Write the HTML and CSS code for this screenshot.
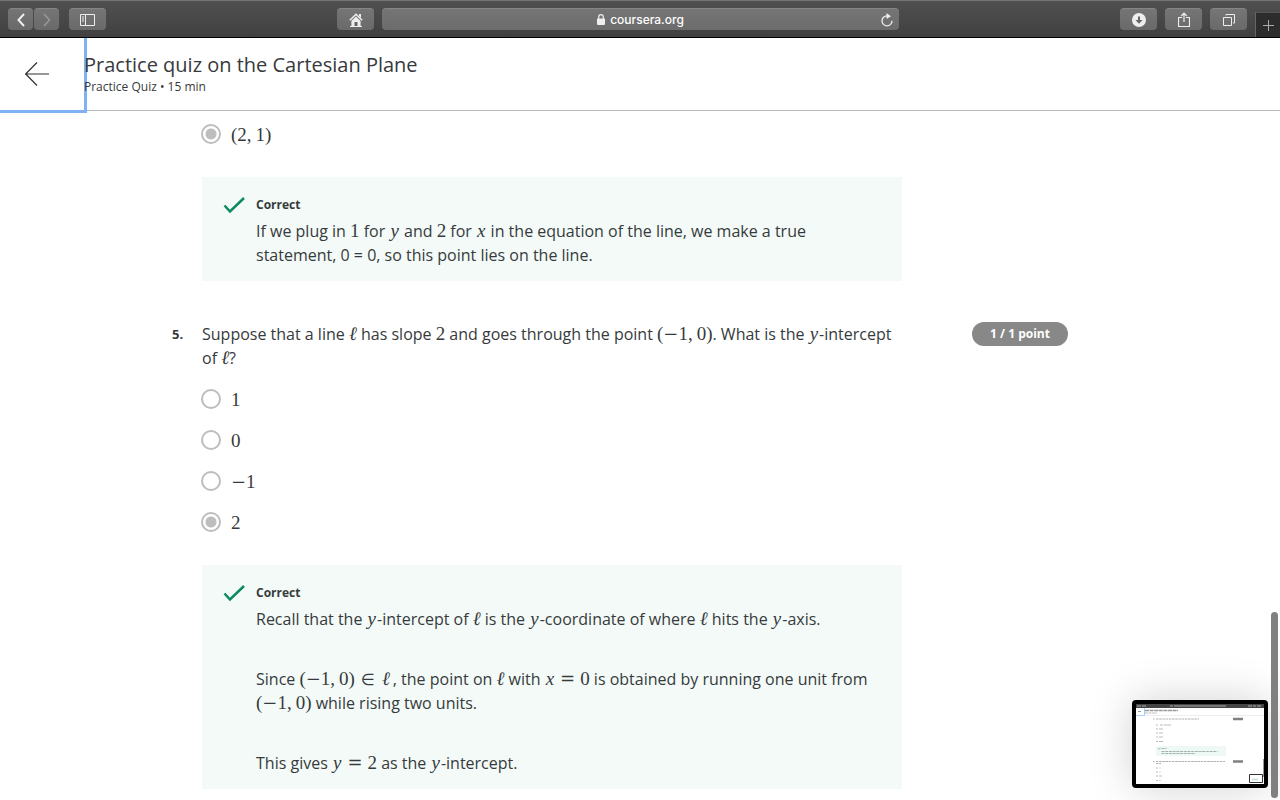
FILE: index.html
```html
<!DOCTYPE html>
<html lang="en">
<head>
<meta charset="utf-8">
<meta name="viewport" content="width=device-width, initial-scale=1">
<title>Practice quiz on the Cartesian Plane</title>
<link rel="stylesheet" href="styles.css">
</head>
<body>
<div class="toolbar">
  <div class="group history">
    <button class="tool narrow" aria-label="Back"><svg width="8" height="14" viewBox="0 0 8 14"><path d="M7 1 1.500 7 7 13" stroke="#eee" stroke-width="2"/></svg></button>
    <button class="tool narrow" aria-label="Forward"><svg width="8" height="14" viewBox="0 0 8 14"><path d="M1 1 6.500 7 1 13" stroke="#999" stroke-width="1.500"/></svg></button>
  </div>
  <button class="tool" aria-label="Sidebar"><svg width="15" height="12" viewBox="0 0 15 12"><path d="M.5.500h14v11H.5zM5.500.500v11M2 3h2M2 5h2M2 7h2" stroke="#eee"/></svg></button>
  <div class="group middle">
    <button class="tool" aria-label="Home"><svg width="14" height="14" viewBox="0 0 14 14"><path d="M.8 7.300 7 1.200l6.200 6.100" stroke="#eee" stroke-width="1.500"/><path d="M10 1h2v4l-2-2zM7 3.500 11.600 8v5H13v1H1v-1h1.400V8z" fill="#eee"/><path d="M5.500 9h3v4h-3z" fill="#666"/></svg></button>
    <div class="address">
      <span class="site"><svg width="8" height="11" viewBox="0 0 8 11"><path d="M0 4.500h8V10a1 1 0 0 1-1 1H1a1 1 0 0 1-1-1z" fill="#eee"/><path d="M1.700 5V3a2.300 2.300 0 0 1 4.600 0v2" stroke="#eee" stroke-width="1.200"/></svg>coursera.org</span>
      <button class="reload" aria-label="Reload"><svg width="12" height="14" viewBox="0 0 12 14"><path d="M6 2.800a5 5 0 1 0 5 5" stroke="#eee" stroke-width="1.300"/><path d="M5.500 0 10 3.200 5.500 6z" fill="#eee"/></svg></button>
    </div>
  </div>
  <div class="group actions">
    <button class="tool" aria-label="Downloads"><svg width="14" height="14" viewBox="0 0 14 14"><circle cx="7" cy="7" r="7" fill="#eee"/><path d="M6 3.500h2V7h2.500L7 10.800 3.500 7H6z" fill="#666"/></svg></button>
    <button class="tool" aria-label="Share"><svg width="12" height="16" viewBox="0 0 12 16"><path d="M4 5.500H.5v9h11v-9H8M6 10V1.500M3.200 4 6 1.200 8.800 4" stroke="#eee" stroke-width="1.200"/></svg></button>
    <button class="tool" aria-label="Tabs"><svg width="12" height="12" viewBox="0 0 12 12"><path d="M.5 3.500h8v8h-8zM3 1.500v-1h8.500V9H10" stroke="#eee"/></svg></button>
  </div>
  <button class="newtab" aria-label="New tab"><svg width="11" height="11" viewBox="0 0 11 11"><path d="M5.500 0v11M0 5.500h11" stroke="#aaa"/></svg></button>
</div>

<header class="header">
  <button class="back" aria-label="Go back"><svg width="24" height="24" viewBox="0 0 24 24"><path d="M24 12H1M12 .5.700 12 12 23.500" stroke="#333" stroke-width="1.200"/></svg></button>
  <div class="heading">
    <h1>Practice quiz on the Cartesian Plane</h1>
    <p>Practice Quiz • 15 min</p>
  </div>
</header>

<main class="page">
  <div class="quiz">
    <section class="question">
      <div class="body">
        <label class="option"><input type="radio" name="q4" checked><span class="m">(2,<i class="thin"></i>1)</span></label>
        <div class="feedback">
          <svg class="check" width="22" height="18" viewBox="0 0 22 18"><path d="M1.500 9.500 7 15.500 21 2" stroke="#0a8a5f" stroke-width="2.500"/></svg>
          <div class="note">
            <h2>Correct</h2>
            <p>If we plug in <span class="m">1</span> for <var>y</var> and <span class="m">2</span> for <var>x</var> in the equation of the line, we make a true statement, 0 = 0, so this point lies on the line.</p>
          </div>
        </div>
      </div>
    </section>
    <section class="question">
      <div class="number">5.</div>
      <div class="body">
        <p class="prompt">Suppose that a line <var class="ell">ℓ</var> has slope <span class="m">2</span> and goes through the point <span class="m">(<b>−</b>1,<i class="thin"></i>0)</span>. What is the <var>y</var>-intercept of <var class="ell">ℓ</var>?</p>
        <div class="options">
          <label class="option"><input type="radio" name="q5"><span class="m">1</span></label>
          <label class="option"><input type="radio" name="q5"><span class="m">0</span></label>
          <label class="option"><input type="radio" name="q5"><span class="m"><b>−</b>1</span></label>
          <label class="option"><input type="radio" name="q5" checked><span class="m">2</span></label>
        </div>
        <div class="feedback">
          <svg class="check" width="22" height="18" viewBox="0 0 22 18"><path d="M1.500 9.500 7 15.500 21 2" stroke="#0a8a5f" stroke-width="2.500"/></svg>
          <div class="note">
            <h2>Correct</h2>
            <p>Recall that the <var>y</var>-intercept of <var class="ell">ℓ</var> is the <var>y</var>-coordinate of where <var class="ell">ℓ</var> hits the <var>y</var>-axis.</p>
            <p>Since <span class="m">(<b>−</b>1,<i class="thin"></i>0)<b class="rel in">∈</b><var class="script">ℓ</var></span>, the point on <var class="ell">ℓ</var> with <span class="m"><var>x</var><b class="rel">=</b>0</span> is obtained by running one unit from <span class="m">(<b>−</b>1,<i class="thin"></i>0)</span> while rising two units.</p>
            <p>This gives <span class="m"><var>y</var><b class="rel">=</b>2</span> as the <var>y</var>-intercept.</p>
          </div>
        </div>
      </div>
      <div class="points">1 / 1 point</div>
    </section>
  </div>
</main>

<div class="scrollbar"></div>
<div class="preview">
  <svg width="128" height="80" viewBox="0 0 128 80">
    <path d="M0 0h128v80H0z" fill="#fff"/>
    <path d="M0 0h128v4H0z" fill="#444"/>
    <path d="M1 2h4M6 2h4M34 2h3M38 2h52M112 2h4M117 2h3M121 2h4" stroke="#777" stroke-width="2"/>
    <path d="M8.500 4v7.500H0" stroke="#a9cdfa"/>
    <path d="M9 11.500h119" stroke="#ddd" stroke-width=".5"/>
    <path d="M2 7.500h3" stroke="#999"/>
    <path d="M9 6.500h33" stroke="#999" stroke-width="1.500" stroke-dasharray="4 .6"/>
    <path d="M9 9h12" stroke="#bbb" stroke-dasharray="3 .5"/>
    <path d="M17 15h1.500M20 15h43M17 57.500h1.500M20 57.500h69M20 59.500h5" stroke="#b0b0b0" stroke-dasharray="2.500 .7"/>
    <path d="M97 15h10M97 57.500h10" stroke="#808080" stroke-width="2.500"/>
    <path d="M20 21h2M24 21h3M28 21h7M20 25h2M23 25h4M20 29h2M23 29h4M20 33h2M23 33h4M20 37.500h2M23 37.500h4M20 64h2M23.500 64h1M20 68h2M23.500 68h1M20 72h2M23 72h3M20 76.500h2M23.500 76.500h1" stroke="#bbb"/>
    <path d="M20 42h70v10H20z" fill="#eef8f5"/>
    <path d="m22 44.500 1 .8 1.500-1.500" stroke="#0a8a5f" stroke-width=".5"/>
    <path d="M25.500 44.500h5M25.500 47.500h56M25.500 49.500h34" stroke="#a5b2ad" stroke-dasharray="3 .7"/>
    <path d="M127.500 55v18" stroke="#999"/>
    <path d="M113.500 70.500h13v8h-13z" fill="#fff" stroke="#333"/>
    <path d="M116 75.500h6" stroke="#cde4dc" stroke-width="2"/>
  </svg>
</div>
</body>
</html>
```
FILE: styles.css
```css
* { box-sizing: border-box; }
body {
  margin: 0;
  height: 100vh;
  overflow: hidden;
  display: flex;
  flex-direction: column;
  position: relative;
  background: #fff;
  color: #373a3c;
  font: 16px/24px "Open Sans", "Noto Sans", sans-serif;
}
h1, h2, p { margin: 0; font-weight: 400; }
button { padding: 0; border: 0; background: none; }
svg { display: block; fill: none; flex: none; }

.toolbar {
  flex: none;
  height: 38px;
  display: flex;
  align-items: center;
  padding-left: 8px;
  background: linear-gradient(#505050, #404040);
  border-top: 1px solid #757575;
  border-bottom: 1px solid #000;
  position: relative;
  z-index: 2;
}
.group { display: flex; gap: 8px; }
.history { gap: 1px; margin-right: 10px; }
.middle { flex: 0 1 572px; margin: 0 auto; padding-left: 10px; }
.actions { margin-right: 8px; }
.tool {
  width: 37px;
  height: 22px;
  flex: none;
  display: flex;
  align-items: center;
  justify-content: center;
  border-radius: 4px;
  background: linear-gradient(#757575, #6a6a6a);
  border-top: 1px solid #858585;
}
.narrow { width: 25px; }
.address {
  flex: 1;
  height: 22px;
  display: flex;
  align-items: center;
  border-radius: 4px;
  background: linear-gradient(#757575, #6c6c6c);
  border-top: 1px solid #858585;
  padding: 0 6px 0 18px;
}
.site {
  flex: 1;
  display: flex;
  align-items: center;
  justify-content: center;
  gap: 5px;
  color: #fff;
  font: 500 12px/20px Inter, sans-serif;
}
.newtab {
  width: 25px;
  align-self: flex-end;
  height: 25px;
  display: flex;
  align-items: center;
  justify-content: center;
  background: #2c2c2c;
  border-left: 1px solid #666;
  border-top: 1px solid #555;
}

.header {
  flex: none;
  display: flex;
  border-bottom: 1px solid #bbb;
  position: relative;
  z-index: 1;
}
.back {
  width: 84px;
  height: 72px;
  padding-right: 10px;
  display: flex;
  align-items: center;
  justify-content: center;
  box-shadow: 0 0 0 3px #80b1f5;
}
.heading { padding-top: 13px; position: relative; }
.heading h1 { font-size: 20px; line-height: 28px; }
.heading p { font-size: 12px; line-height: 16px; }

.page { flex: 1; min-height: 0; overflow: hidden; padding: 11px 40px 0 0; }
.quiz {
  max-width: 896px;
  margin: 0 auto;
  display: flex;
  flex-direction: column;
  gap: 41px;
}
.question { display: grid; grid-template-columns: 30px minmax(0, 700px) 1fr; align-items: start; }
.number { font-size: 13px; font-weight: 700; }
.body { grid-column: 2; }
.options { display: flex; flex-direction: column; gap: 17px; padding-top: 17px; }
.option { display: flex; align-items: center; gap: 10px; height: 24px; margin-left: -1px; }
.option input {
  appearance: none;
  width: 20px;
  height: 20px;
  margin: 0;
  flex: none;
  border: 2px solid #bdbdbd;
  border-radius: 50%;
  background: #fff;
}
.option input:checked { background: radial-gradient(circle, #bdbdbd 5px, #fff 6px); }
.feedback {
  display: flex;
  gap: 11px;
  margin-top: 31px;
  padding: 19px 21px 14px;
  background: #f3faf8;
}
.note { display: flex; flex-direction: column; gap: 36px; }
.note h2 { font-size: 12px; line-height: 18px; font-weight: 700; margin-bottom: -31px; }
.points {
  justify-self: end;
  width: 96px;
  border-radius: 12px;
  background: #888;
  color: #fff;
  font-size: 12px;
  font-weight: 700;
  text-align: center;
}

.m, var {
  font-family: "Liberation Serif", "DejaVu Serif", serif;
  font-size: 19px;
  line-height: 1;
  white-space: nowrap;
}
var { padding: 0 1px; }
.ell { padding: 0; }
.m b { font-family: "DejaVu Serif", serif; font-size: 18px; line-height: 1; font-weight: 400; }
.m .rel { margin: 0 5px; }
.m .in { font-family: "DejaVu Sans", sans-serif; font-size: 16px; margin: 0 6px; }
.thin { margin-right: 4px; }
.script { padding: 0 3px 0 1px; }

.scrollbar {
  position: absolute;
  right: 2px;
  bottom: 2px;
  width: 7px;
  height: 186px;
  border-radius: 4px;
  background: #808080;
  z-index: 3;
}
.preview {
  position: absolute;
  right: 12px;
  bottom: 12px;
  border: 4px solid #000;
  border-radius: 4px;
  background: #000;
  box-shadow: 0 0 44px rgba(0, 0, 0, .18);
  z-index: 2;
}
```
